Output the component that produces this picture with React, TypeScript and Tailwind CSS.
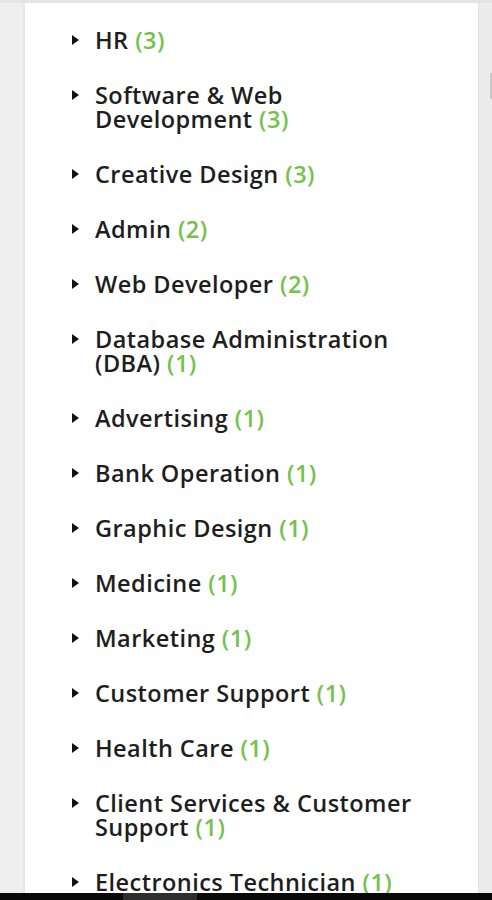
const categories: { name: string; count: number }[] = [
  { name: "HR", count: 3 },
  { name: "Software & Web Development", count: 3 },
  { name: "Creative Design", count: 3 },
  { name: "Admin", count: 2 },
  { name: "Web Developer", count: 2 },
  { name: "Database Administration (DBA)", count: 1 },
  { name: "Advertising", count: 1 },
  { name: "Bank Operation", count: 1 },
  { name: "Graphic Design", count: 1 },
  { name: "Medicine", count: 1 },
  { name: "Marketing", count: 1 },
  { name: "Customer Support", count: 1 },
  { name: "Health Care", count: 1 },
  { name: "Client Services & Customer Support", count: 1 },
  { name: "Electronics Technician", count: 1 },
]

function Caret() {
  return (
    <svg width="7" height="10" viewBox="0 0 7 10" className="mt-[7px] shrink-0">
      <path d="M0 0 L7 5 L0 10 Z" fill="#111" />
    </svg>
  )
}

export default function App() {
  return (
    <div className="h-[900px] w-[492px] overflow-hidden flex flex-col bg-[#efefef]">
      <div className="h-[3px] bg-[#e4e4e4] shrink-0" />
      <div className="flex flex-1 min-h-0">
        <div className="w-[25px] shrink-0 bg-[#efefef] border-r-2 border-[#e6e6e6]" />
        <div className="flex-1 bg-white overflow-hidden">
          <ul
            className="pl-[47px] pt-[25px] w-[400px]"
            style={{ fontFamily: '"Open Sans", sans-serif' }}
          >
            {categories.map((c) => (
              <li key={c.name} className="flex gap-[16px] mb-[31px]">
                <Caret />
                <span className="text-[23.5px] leading-[24px] font-semibold tracking-[0.45px] text-[#1e1e1e]">
                  {c.name} <span className="text-[#74c24b]">({c.count})</span>
                </span>
              </li>
            ))}
          </ul>
        </div>
        <div className="w-[14px] shrink-0 bg-[#ececec] border-l border-[#e2e2e2] relative">
          <div className="absolute right-0 top-[70px] h-[26px] w-[2px] bg-[#c8c8c8]" />
        </div>
      </div>
      <div className="h-[7px] bg-[#0a0a0a] shrink-0 flex">
        <div className="ml-[123px] w-[74px] bg-[#2e2e2e]" />
      </div>
    </div>
  )
}
